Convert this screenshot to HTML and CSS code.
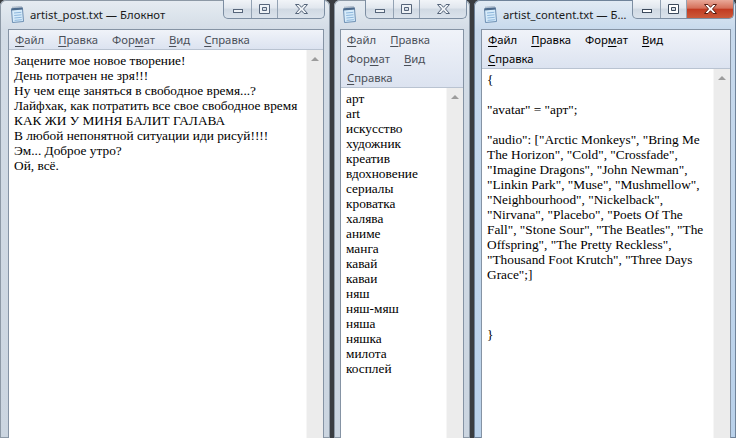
FILE: index.html
```html
<!DOCTYPE html>
<html lang="ru">
<head>
<meta charset="utf-8">
<title>Блокнот</title>
<link rel="stylesheet" href="styles.css">
</head>
<body>
<div class="win win-post">
  <div class="titlebar">
    <svg class="app-icon" width="16" height="17" viewBox="0 0 16 17"><path d="M2.5 3.5 L13.5 2.5 L14.5 15.5 L3.5 16.5 Z" fill="#d6ebfa" stroke="#6d8fb3"/><path d="M5 7 L12.3 6.3 M5.2 9.5 L12.5 8.8 M5.4 12 L12.7 11.3 M5.6 14.4 L12.9 13.7" stroke="#8db6dc"/><path d="M2.3 2.2 L13.6 1.2 L13.8 3.6 L2.5 4.6 Z" fill="#4c6a8c"/><path d="M4 2.2v-1.6M6 2v-1.6M8 1.8v-1.6M10 1.6v-1.6M12 1.4v-1.6" stroke="#8a9bb0" stroke-width="1"/></svg>
    <div class="title">artist_post.txt — Блокнот</div>
    <div class="caps caps-wide">
      <div class="cap cap-min"><svg width="10" height="4"><rect x="0.5" y="0.5" width="9" height="3" fill="#eef2f6" stroke="#56657a"/></svg></div>
      <div class="cap cap-max"><svg width="11" height="10"><path d="M0.5 0.5h10v9h-10z M3.5 3.5v3h4v-3z" fill="#eef2f6" fill-rule="evenodd" stroke="#56657a"/></svg></div>
      <div class="cap cap-close"><svg width="13" height="10"><path d="M0.5 0.5H4L6.5 3.3L9 0.5H12.5L8.5 5L12.5 9.5H9L6.5 6.7L4 9.5H0.5L4.5 5Z" fill="#eef2f6" stroke="#56657a"/></svg></div>
    </div>
  </div>
  <div class="client">
    <div class="menu">
      <span class="item"><u>Ф</u>айл</span><span class="item"><u>П</u>равка</span><span class="item">Фор<u>м</u>ат</span><span class="item"><u>В</u>ид</span><span class="item"><u>С</u>правка</span>
    </div>
    <div class="edit">
      <div class="text">Зацените мое новое творение!
День потрачен не зря!!!
Ну чем еще заняться в свободное время...?
Лайфхак, как потратить все свое свободное время
КАК ЖИ У МИНЯ БАЛИТ ГАЛАВА
В любой непонятной ситуации иди рисуй!!!!
Эм... Доброе утро?
Ой, всё.</div>
      <div class="scroll"><span class="arrow"></span></div>
    </div>
  </div>
</div>

<div class="win win-tags">
  <div class="titlebar">
    <svg class="app-icon" width="16" height="17" viewBox="0 0 16 17"><path d="M2.5 3.5 L13.5 2.5 L14.5 15.5 L3.5 16.5 Z" fill="#d6ebfa" stroke="#6d8fb3"/><path d="M5 7 L12.3 6.3 M5.2 9.5 L12.5 8.8 M5.4 12 L12.7 11.3 M5.6 14.4 L12.9 13.7" stroke="#8db6dc"/><path d="M2.3 2.2 L13.6 1.2 L13.8 3.6 L2.5 4.6 Z" fill="#4c6a8c"/><path d="M4 2.2v-1.6M6 2v-1.6M8 1.8v-1.6M10 1.6v-1.6M12 1.4v-1.6" stroke="#8a9bb0" stroke-width="1"/></svg>
    <div class="caps">
      <div class="cap cap-min"><svg width="10" height="4"><rect x="0.5" y="0.5" width="9" height="3" fill="#eef2f6" stroke="#56657a"/></svg></div>
      <div class="cap cap-max"><svg width="11" height="10"><path d="M0.5 0.5h10v9h-10z M3.5 3.5v3h4v-3z" fill="#eef2f6" fill-rule="evenodd" stroke="#56657a"/></svg></div>
      <div class="cap cap-close"><svg width="13" height="10"><path d="M0.5 0.5H4L6.5 3.3L9 0.5H12.5L8.5 5L12.5 9.5H9L6.5 6.7L4 9.5H0.5L4.5 5Z" fill="#eef2f6" stroke="#56657a"/></svg></div>
    </div>
  </div>
  <div class="client">
    <div class="menu">
      <span class="item"><u>Ф</u>айл</span><span class="item"><u>П</u>равка</span><span class="break"></span><span class="item">Фор<u>м</u>ат</span><span class="item"><u>В</u>ид</span><span class="break"></span><span class="item"><u>С</u>правка</span>
    </div>
    <div class="edit">
      <div class="text">арт
art
искусство
художник
креатив
вдохновение
сериалы
кроватка
халява
аниме
манга
кавай
каваи
няш
няш-мяш
няша
няшка
милота
косплей</div>
      <div class="scroll"><span class="arrow"></span></div>
    </div>
  </div>
</div>

<div class="win win-content active">
  <div class="titlebar">
    <svg class="app-icon" width="16" height="17" viewBox="0 0 16 17"><path d="M2.5 3.5 L13.5 2.5 L14.5 15.5 L3.5 16.5 Z" fill="#d6ebfa" stroke="#6d8fb3"/><path d="M5 7 L12.3 6.3 M5.2 9.5 L12.5 8.8 M5.4 12 L12.7 11.3 M5.6 14.4 L12.9 13.7" stroke="#8db6dc"/><path d="M2.3 2.2 L13.6 1.2 L13.8 3.6 L2.5 4.6 Z" fill="#4c6a8c"/><path d="M4 2.2v-1.6M6 2v-1.6M8 1.8v-1.6M10 1.6v-1.6M12 1.4v-1.6" stroke="#8a9bb0" stroke-width="1"/></svg>
    <div class="title">artist_content.txt — Блокнот</div>
    <div class="caps">
      <div class="cap cap-min"><svg width="10" height="4"><rect x="0.5" y="0.5" width="9" height="3" fill="#fff" stroke="#3c4a5c"/></svg></div>
      <div class="cap cap-max"><svg width="11" height="10"><path d="M0.5 0.5h10v9h-10z M3.5 3.5v3h4v-3z" fill="#fff" fill-rule="evenodd" stroke="#3c4a5c"/></svg></div>
      <div class="cap cap-close"><svg width="13" height="10"><path d="M0.5 0.5H4L6.5 3.3L9 0.5H12.5L8.5 5L12.5 9.5H9L6.5 6.7L4 9.5H0.5L4.5 5Z" fill="#fff" stroke="#5a1f14"/></svg></div>
    </div>
  </div>
  <div class="client">
    <div class="menu">
      <span class="item"><u>Ф</u>айл</span><span class="item"><u>П</u>равка</span><span class="item">Фор<u>м</u>ат</span><span class="item"><u>В</u>ид</span><span class="break"></span><span class="item"><u>С</u>правка</span>
    </div>
    <div class="edit">
      <div class="text">{

"avatar" = "арт";

"audio": ["Arctic Monkeys", "Bring Me
The Horizon", "Cold", "Crossfade",
"Imagine Dragons", "John Newman",
"Linkin Park", "Muse", "Mushmellow",
"Neighbourhood", "Nickelback",
"Nirvana", "Placebo", "Poets Of The
Fall", "Stone Sour", "The Beatles", "The
Offspring", "The Pretty Reckless",
"Thousand Foot Krutch", "Three Days
Grace";]



}</div>
      <div class="scroll"><span class="arrow"></span></div>
    </div>
  </div>
</div>
</body>
</html>
```
FILE: styles.css
```css
* { box-sizing: border-box; }
html, body { margin: 0; padding: 0; }
body {
  width: 736px;
  height: 438px;
  overflow: hidden;
  display: flex;
  gap: 4px;
  background: #3a3d41;
  font-family: "Noto Sans", "Open Sans", sans-serif;
}
.win {
  display: flex;
  flex-direction: column;
  height: 438px;
  border-radius: 6px 6px 0 0;
  background: linear-gradient(#e6ecf2, #d3dce6 30px, #cbd5e0);
  box-shadow: inset 0 0 0 1px #8d99a6;
}
.win-post { width: 330px; padding: 0 6px 0 8px; }
.win-tags { width: 136px; padding: 0 6px; }
.win-content { width: 262px; padding: 0 5px 0 7px; }
.win.active {
  background: linear-gradient(#e2ebf4, #c7d9ec 30px, #b9d1ea);
  box-shadow: inset 0 0 0 1px #6f839a;
}
.titlebar {
  height: 29px;
  flex: none;
  display: flex;
  align-items: flex-start;
  min-width: 0;
}
.app-icon { flex: none; margin-top: 6px; margin-left: 1px; }
.title {
  margin: 7px 4px 0 5px;
  font-size: 11.3px;
  line-height: 16px;
  color: #1a1a1a;
  white-space: nowrap;
  overflow: hidden;
  text-overflow: ellipsis;
  min-width: 0;
  flex: 1;
}
.caps {
  flex: none;
  margin-left: auto;
  margin-right: -3px;
  display: flex;
  height: 19px;
  border: 1px solid #7d8ea2;
  border-top: none;
  border-radius: 0 0 5px 5px;
  overflow: hidden;
  background: linear-gradient(#f1f4f8, #e1e7ee 45%, #d0d9e3 50%, #dbe3ec);
}
.caps-wide { margin-right: -1px; }
.cap {
  display: flex;
  align-items: center;
  justify-content: center;
  height: 100%;
}
.cap + .cap { border-left: 1px solid #93a2b3; }
.cap-min { width: 27px; padding-top: 4px; }
.cap-max { width: 26px; }
.cap-close { width: 47px; }
.active .cap-close {
  background: linear-gradient(#e9a999, #d5705a 45%, #c23b22 52%, #cc5a3a);
}
.client {
  flex: 1;
  display: flex;
  flex-direction: column;
  border: 1px solid #8593a4;
  border-bottom: none;
  min-height: 0;
  background: #fff;
}
.menu {
  flex: none;
  display: flex;
  flex-wrap: wrap;
  background: linear-gradient(#f0f3f9, #dce3f0);
  border-bottom: 1px solid #b9c3d1;
}
.menu .item {
  padding: 0 8px 0 6px;
  height: 19px;
  line-height: 19px;
  font-size: 11.3px;
  color: #4a4f58;
  white-space: nowrap;
}
.active .menu .item { color: #000; }
.menu u { text-underline-offset: 2px; }
.menu .break { flex-basis: 100%; height: 0; }
.edit {
  flex: 1;
  display: flex;
  min-height: 0;
  background: #fff;
}
.text {
  flex: 1;
  min-width: 0;
  padding: 3px 0 0 5px;
  font-family: "Liberation Serif", "Times New Roman", serif;
  font-size: 13.33px;
  line-height: 15px;
  color: #000;
  white-space: pre-wrap;
}
.scroll {
  flex: none;
  width: 17px;
  background: #ececec;
  border-left: 1px solid #f6f6f6;
  display: flex;
  justify-content: center;
  padding-top: 7px;
}
.arrow {
  width: 0;
  height: 0;
  border-left: 4px solid transparent;
  border-right: 4px solid transparent;
  border-bottom: 4px solid #9c9c9c;
}
```
